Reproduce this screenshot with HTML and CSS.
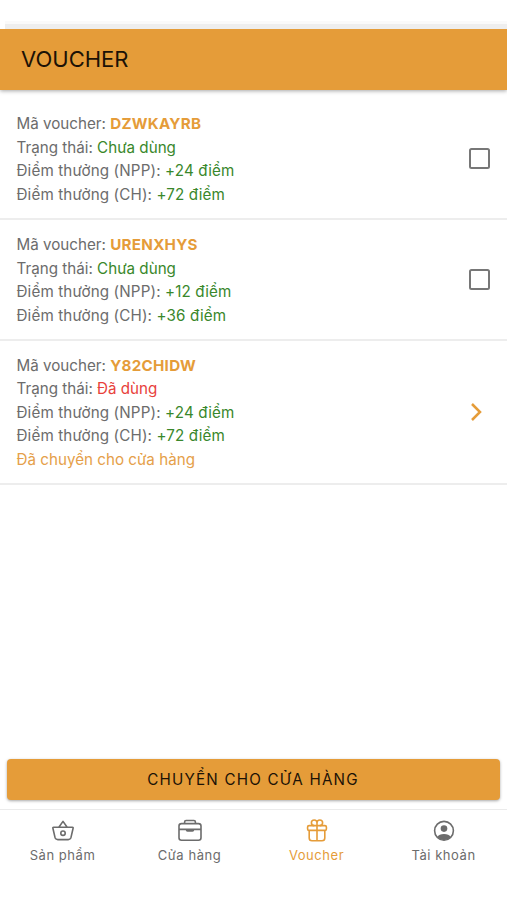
FILE: index.html
```html
<!DOCTYPE html>
<html lang="vi">
<head>
<meta charset="utf-8">
<meta name="viewport" content="width=device-width, initial-scale=1">
<title>Voucher</title>
<link rel="stylesheet" href="styles.css">
</head>
<body>
<div class="status"></div>
<header class="header"><h1>VOUCHER</h1></header>
<main class="list">
  <div class="item">
    <div class="info">
      <p>Mã voucher: <b class="code">DZWKAYRB</b></p>
      <p>Trạng thái: <span class="green">Chưa dùng</span></p>
      <p class="points">Điểm thưởng (NPP): <span class="green">+24 điểm</span></p>
      <p class="points">Điểm thưởng (CH): <span class="green">+72 điểm</span></p>
    </div>
    <span class="check"></span>
  </div>
  <div class="item">
    <div class="info">
      <p>Mã voucher: <b class="code">URENXHYS</b></p>
      <p>Trạng thái: <span class="green">Chưa dùng</span></p>
      <p class="points">Điểm thưởng (NPP): <span class="green">+12 điểm</span></p>
      <p class="points">Điểm thưởng (CH): <span class="green">+36 điểm</span></p>
    </div>
    <span class="check"></span>
  </div>
  <div class="item">
    <div class="info">
      <p>Mã voucher: <b class="code">Y82CHIDW</b></p>
      <p>Trạng thái: <span class="red">Đã dùng</span></p>
      <p class="points">Điểm thưởng (NPP): <span class="green">+24 điểm</span></p>
      <p class="points">Điểm thưởng (CH): <span class="green">+72 điểm</span></p>
      <p class="orange">Đã chuyển cho cửa hàng</p>
    </div>
    <svg class="chevron" viewBox="0 0 12 20"><path d="M2 2l8 8-8 8"/></svg>
  </div>
</main>
<button class="transfer" type="button">CHUYỂN CHO CỬA HÀNG</button>
<nav class="tabs">
  <a class="tab">
    <svg viewBox="0 0 26 24"><path d="M3.6 8.2H22.4Q23.4 8.2 23.1 9.2L21 18.4Q20.4 20.6 18.2 20.6H7.8Q5.6 20.6 5 18.4L2.9 9.2Q2.6 8.2 3.6 8.2ZM9 8L13 2.4 17 8"/><circle cx="13" cy="14.2" r="2.2"/></svg>
    <span>Sản phẩm</span>
  </a>
  <a class="tab">
    <svg viewBox="0 0 26 24"><rect x="2" y="4.6" width="22" height="16.6" rx="2.5"/><path d="M7.6 4.5V3Q7.6 1.5 9.1 1.5H16.9Q18.4 1.5 18.4 3V4.5M2 10.4H24M9.5 10.5V11Q9.5 12 10.5 12H15.5Q16.5 12 16.5 11V10.5"/></svg>
    <span>Cửa hàng</span>
  </a>
  <a class="tab active">
    <svg viewBox="0 0 26 24"><rect x="3.6" y="6.6" width="18.8" height="4.8" rx="1.5"/><path d="M5.2 11.4V19Q5.2 21.8 8 21.8H18Q20.8 21.8 20.8 19V11.4M13 3.8V21.8M13 6.6V3.8A2.8 2.8 0 1 0 10.2 6.6M13 3.8A2.8 2.8 0 1 1 15.8 6.6"/></svg>
    <span>Voucher</span>
  </a>
  <a class="tab">
    <svg viewBox="0 0 26 24"><circle cx="13" cy="11.8" r="9.4"/><circle class="solid" cx="13" cy="9.6" r="3.3"/><path class="solid" d="M6 18Q8.2 14.9 13 14.9T20 18Q17 21.2 13 21.2T6 18Z"/></svg>
    <span>Tài khoản</span>
  </a>
</nav>
</body>
</html>
```

FILE: styles.css
```css
* { box-sizing: border-box; }
body {
  margin: 0;
  height: 900px;
  display: flex;
  flex-direction: column;
  overflow: hidden;
  background: #fff;
  color: #6c6c6c;
  font-family: Inter, "Liberation Sans", sans-serif;
}
.status {
  height: 29px;
  margin-left: 5px;
  flex: none;
  background: linear-gradient(#fff 21px, #fafafa 21px 24px, #eee 24px);
}
.header {
  height: 61px;
  flex: none;
  display: flex;
  align-items: center;
  padding: 0 0 2px 21px;
  background: #e59c39;
  box-shadow: 0 1px 4px rgba(0, 0, 0, .35);
  clip-path: inset(0 0 -8px 0);
}
h1 {
  margin: 0;
  color: #1c1206;
  font-size: 22px;
  font-weight: 400;
  line-height: 28px;
}
.list {
  flex: 1;
  padding-top: 9px;
}
.item {
  display: flex;
  align-items: center;
  justify-content: space-between;
  padding: 13px 17px 12px 16.5px;
  border-bottom: 2px solid #ededed;
}
.info {
  padding-top: .4px;
  margin-bottom: -.4px;
}
.info p {
  margin: 0;
  font-size: 15.2px;
  line-height: 23.45px;
  white-space: nowrap;
}
.info .points { letter-spacing: .13px; }
.code {
  color: #e59c39;
  font-weight: 650;
  letter-spacing: .25px;
}
.green { color: #39872b; }
.red { color: #e8413b; }
.info .orange { color: #e5a04a; }
.check {
  width: 21px;
  height: 21px;
  border: 2px solid #777;
  border-radius: 2.5px;
}
.chevron {
  width: 12px;
  height: 20px;
  margin-right: 8px;
  fill: none;
  stroke: #e59c39;
  stroke-width: 2.5;
}
.transfer {
  flex: none;
  height: 41px;
  margin: 0 7.5px 9px 6.5px;
  padding: 0;
  border: 0;
  border-radius: 4px;
  background: #e59c39;
  box-shadow: 0 1px 3px rgba(0, 0, 0, .35);
  color: #1c1206;
  font: 400 15.2px/40px Inter, "Liberation Sans", sans-serif;
  letter-spacing: 1.2px;
}
.tabs {
  flex: none;
  height: 91px;
  display: grid;
  grid-template-columns: repeat(4, 127px);
  border-top: 1px solid #ebebeb;
  margin-left: -1px;
  width: 509px;
}
.tab {
  display: flex;
  flex-direction: column;
  align-items: center;
  padding-top: 9px;
  font-size: 13px;
  line-height: 18px;
  letter-spacing: .55px;
}
.tab svg {
  width: 26px;
  height: 24px;
  margin-bottom: 3px;
  fill: none;
  stroke: #6c6c6c;
  stroke-width: 1.6;
  stroke-linejoin: round;
}
.tab .solid { fill: #6c6c6c; stroke: none; }
.active { color: #e59c39; }
.active svg { stroke: #e59c39; }
```
